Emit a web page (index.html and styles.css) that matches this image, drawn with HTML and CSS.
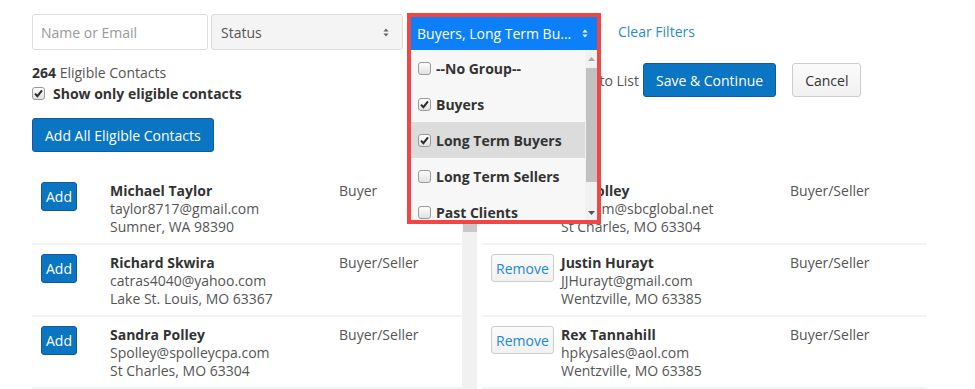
FILE: index.html
```html
<!DOCTYPE html>
<html lang="en">
<head>
<meta charset="utf-8">
<title>Contacts</title>
<link rel="stylesheet" href="styles.css">
</head>
<body>
<div class="page">
  <div class="filters">
    <input class="search" type="text" placeholder="Name or Email">
    <div class="status">
      <span>Status</span>
      <svg class="caret" width="6" height="9" viewBox="0 0 6 9"><path d="M3 0.5L5.6 3.6H0.4Z M3 8.5L0.4 5.4H5.6Z" fill="currentColor"/></svg>
    </div>
    <div class="group">
      <div class="group-btn">
        <span>Buyers, Long Term Bu...</span>
        <svg class="caret" width="6" height="9" viewBox="0 0 6 9"><path d="M3 0.5L5.6 3.6H0.4Z M3 8.5L0.4 5.4H5.6Z" fill="currentColor"/></svg>
      </div>
      <div class="group-menu">
        <ul class="menu-list">
          <li class="menu-item"><span class="cb"></span>--No Group--</li>
          <li class="menu-item"><span class="cb checked"><svg viewBox="0 0 13 13"><path d="M3 6.6L5.4 9.2L10 3.4" /></svg></span>Buyers</li>
          <li class="menu-item hover"><span class="cb checked"><svg viewBox="0 0 13 13"><path d="M3 6.6L5.4 9.2L10 3.4" /></svg></span>Long Term Buyers</li>
          <li class="menu-item"><span class="cb"></span>Long Term Sellers</li>
          <li class="menu-item"><span class="cb"></span>Past Clients</li>
        </ul>
        <div class="menu-scroll">
          <svg class="arrow up" width="7" height="4" viewBox="0 0 7 4"><path d="M3.5 0L7 4H0Z"/></svg>
          <div class="menu-thumb"></div>
          <svg class="arrow down" width="7" height="4" viewBox="0 0 7 4"><path d="M0 0H7L3.5 4Z"/></svg>
        </div>
      </div>
      <div class="annot"></div>
    </div>
    <a class="clear" href="#">Clear Filters</a>
  </div>

  <div class="columns">
    <div class="left-head">
      <p class="count"><b>264</b> Eligible Contacts</p>
      <label class="check-line"><span class="cb checked"><svg viewBox="0 0 13 13"><path d="M3 6.6L5.4 9.2L10 3.4" /></svg></span>Show only eligible contacts</label>
      <button class="btn primary big">Add All Eligible Contacts</button>
    </div>
    <div class="right-head">
      <div class="added">Added to List</div>
      <button class="btn primary big save">Save &amp; Continue</button>
      <button class="btn default big cancel">Cancel</button>
    </div>

    <div class="list-wrap">
      <div class="list">
        <div class="row">
          <div class="act"><button class="btn primary small">Add</button></div>
          <div class="info"><div class="name">Michael Taylor</div><div>taylor8717@gmail.com</div><div>Sumner, WA 98390</div></div>
          <div class="role">Buyer</div>
        </div>
        <div class="row">
          <div class="act"><button class="btn primary small">Add</button></div>
          <div class="info"><div class="name">Richard Skwira</div><div>catras4040@yahoo.com</div><div>Lake St. Louis, MO 63367</div></div>
          <div class="role">Buyer/Seller</div>
        </div>
        <div class="row">
          <div class="act"><button class="btn primary small">Add</button></div>
          <div class="info"><div class="name">Sandra Polley</div><div>Spolley@spolleycpa.com</div><div>St Charles, MO 63304</div></div>
          <div class="role">Buyer/Seller</div>
        </div>
      </div>
      <div class="vscroll"><div class="thumb"></div></div>
    </div>

    <div class="list right-list">
      <div class="row">
        <div class="act"><button class="btn default small">Remove</button></div>
        <div class="info"><div class="name">Jim Polley</div><div>jimpolm@sbcglobal.net</div><div>St Charles, MO 63304</div></div>
        <div class="role">Buyer/Seller</div>
      </div>
      <div class="row">
        <div class="act"><button class="btn default small remove">Remove</button></div>
        <div class="info"><div class="name">Justin Hurayt</div><div>JJHurayt@gmail.com</div><div>Wentzville, MO 63385</div></div>
        <div class="role">Buyer/Seller</div>
      </div>
      <div class="row">
        <div class="act"><button class="btn default small remove">Remove</button></div>
        <div class="info"><div class="name">Rex Tannahill</div><div>hpkysales@aol.com</div><div>Wentzville, MO 63385</div></div>
        <div class="role">Buyer/Seller</div>
      </div>
    </div>
  </div>
</div>
</body>
</html>
```

FILE: styles.css
```css
html, body {
  margin: 0;
  height: 389px;
  overflow: hidden;
  background: #fff;
}
body {
  font-family: "Open Sans", "Liberation Sans", sans-serif;
  font-size: 14px;
  color: #555;
}
.page {
  padding: 14px 0 0 32px;
}

/* buttons */
.btn {
  box-sizing: border-box;
  margin: 0;
  border-radius: 3px;
  font-family: "Open Sans", sans-serif;
  font-size: 14px;
  cursor: pointer;
  white-space: nowrap;
}
.btn.big {
  height: 34px;
  padding: 0 12px;
}
.btn.small {
  height: 29px;
  padding: 0 4px;
}
.btn.primary {
  background: #0a75c2;
  border: 1px solid #15589f;
  color: #fff;
}
.btn.default {
  background: linear-gradient(#fbfbfb, #f1f1f1);
  border: 1px solid #ccc;
  color: #333;
}
.btn.small.default {
  color: #1c88d3;
  height: 28px;
}

/* filters */
.filters {
  display: flex;
  align-items: flex-start;
  height: 36px;
}
.search {
  box-sizing: border-box;
  width: 176px;
  height: 36px;
  margin: 0;
  padding: 0 8px;
  border: 1px solid #ddd;
  border-radius: 3px;
  font-family: "Open Sans", sans-serif;
  font-size: 14px;
  color: #555;
  outline: none;
}
.search::placeholder { color: #999; }
.status {
  box-sizing: border-box;
  width: 192px;
  height: 36px;
  margin-left: 3px;
  padding: 0 13px 0 9px;
  border: 1px solid #ddd;
  border-radius: 3px;
  background: #f4f4f4;
  display: flex;
  align-items: center;
  justify-content: space-between;
  color: #555;
}
.caret { display: block; }
.status .caret { color: #666; }

.group {
  position: relative;
  width: 186px;
  height: 33px;
  margin: 3px 0 0 8px;
  z-index: 5;
}
.group-btn {
  box-sizing: border-box;
  height: 33px;
  padding: 0 9px 0 6px;
  background: #0b80f8;
  color: #fff;
  display: flex;
  align-items: center;
  justify-content: space-between;
  white-space: nowrap;
}
.group-menu {
  position: absolute;
  top: 33px;
  left: 0;
  width: 186px;
  height: 170px;
  background: #f7f7f7;
  display: flex;
  overflow: hidden;
}
.menu-list {
  list-style: none;
  margin: 0;
  padding: 0;
  width: 174px;
}
.menu-item {
  height: 36px;
  padding-left: 7px;
  display: flex;
  align-items: center;
  gap: 5px;
  font-weight: 700;
  color: #333;
  white-space: nowrap;
}
.menu-item.hover { background: #dcdcdc; }
.menu-scroll {
  position: relative;
  width: 12px;
  height: 170px;
  background: #f1f1f1;
}
.menu-scroll .arrow {
  position: absolute;
  left: 3px;
  fill: #a6a6a6;
}
.menu-scroll .up { top: 7px; }
.menu-scroll .down { bottom: 5px; fill: #555; }
.menu-thumb {
  position: absolute;
  top: 18px;
  left: 1px;
  width: 11px;
  height: 114px;
  background: #c1c1c1;
}
.annot {
  position: absolute;
  left: -4px;
  top: -4px;
  width: 186px;
  height: 203px;
  border: 4px solid #f24646;
  pointer-events: none;
}

.clear {
  margin-left: 21px;
  line-height: 36px;
  color: #2a89d3;
  text-decoration: none;
}

/* checkbox */
.cb {
  box-sizing: border-box;
  flex: 0 0 13px;
  width: 13px;
  height: 13px;
  border: 1px solid #9a9a9a;
  border-radius: 3px;
  background: linear-gradient(#fdfdfd, #e2e2e2);
  display: inline-flex;
  align-items: center;
  justify-content: center;
}
.cb svg {
  width: 13px;
  height: 13px;
  flex: none;
  margin: -1px;
}
.cb svg path {
  fill: none;
  stroke: #2b2b2b;
  stroke-width: 2;
}

/* columns */
.columns {
  display: grid;
  grid-template-columns: 445px 445px;
  column-gap: 5px;
  margin-top: 13px;
}
.left-head {
  padding-bottom: 21px;
}
.count {
  margin: 0;
  line-height: 20px;
}
.count b { color: #333; }
.check-line {
  display: flex;
  align-items: center;
  gap: 8px;
  height: 20px;
  font-weight: 700;
  color: #333;
}
.left-head .btn { margin-top: 15px; }

.right-head {
  display: flex;
  align-items: flex-start;
  height: 34px;
}
.right-head .added {
  flex: 0 0 157px;
  height: 34px;
  display: flex;
  align-items: center;
  justify-content: flex-end;
  white-space: nowrap;
}
.right-head .save { margin-left: 4px; }
.right-head .cancel { margin-left: 16px; }

/* lists */
.list-wrap {
  display: flex;
  height: 216px;
}
.list {
  flex: 1;
}
.vscroll {
  position: relative;
  width: 15px;
  background: #f1f1f1;
}
.thumb {
  position: absolute;
  top: 0;
  left: 1px;
  width: 14px;
  height: 59px;
  background: #c8c8c8;
}
.row {
  display: grid;
  grid-template-columns: 78px 229px 1fr;
  padding: 9px 0 7px;
  border-bottom: 2px solid #f3f3f3;
  line-height: 18px;
}
.right-list .row {
  grid-template-columns: 79px 229px 1fr;
}
.act { padding-left: 9px; }
.name {
  font-weight: 700;
  color: #333;
}
.info div { white-space: nowrap; }
```
